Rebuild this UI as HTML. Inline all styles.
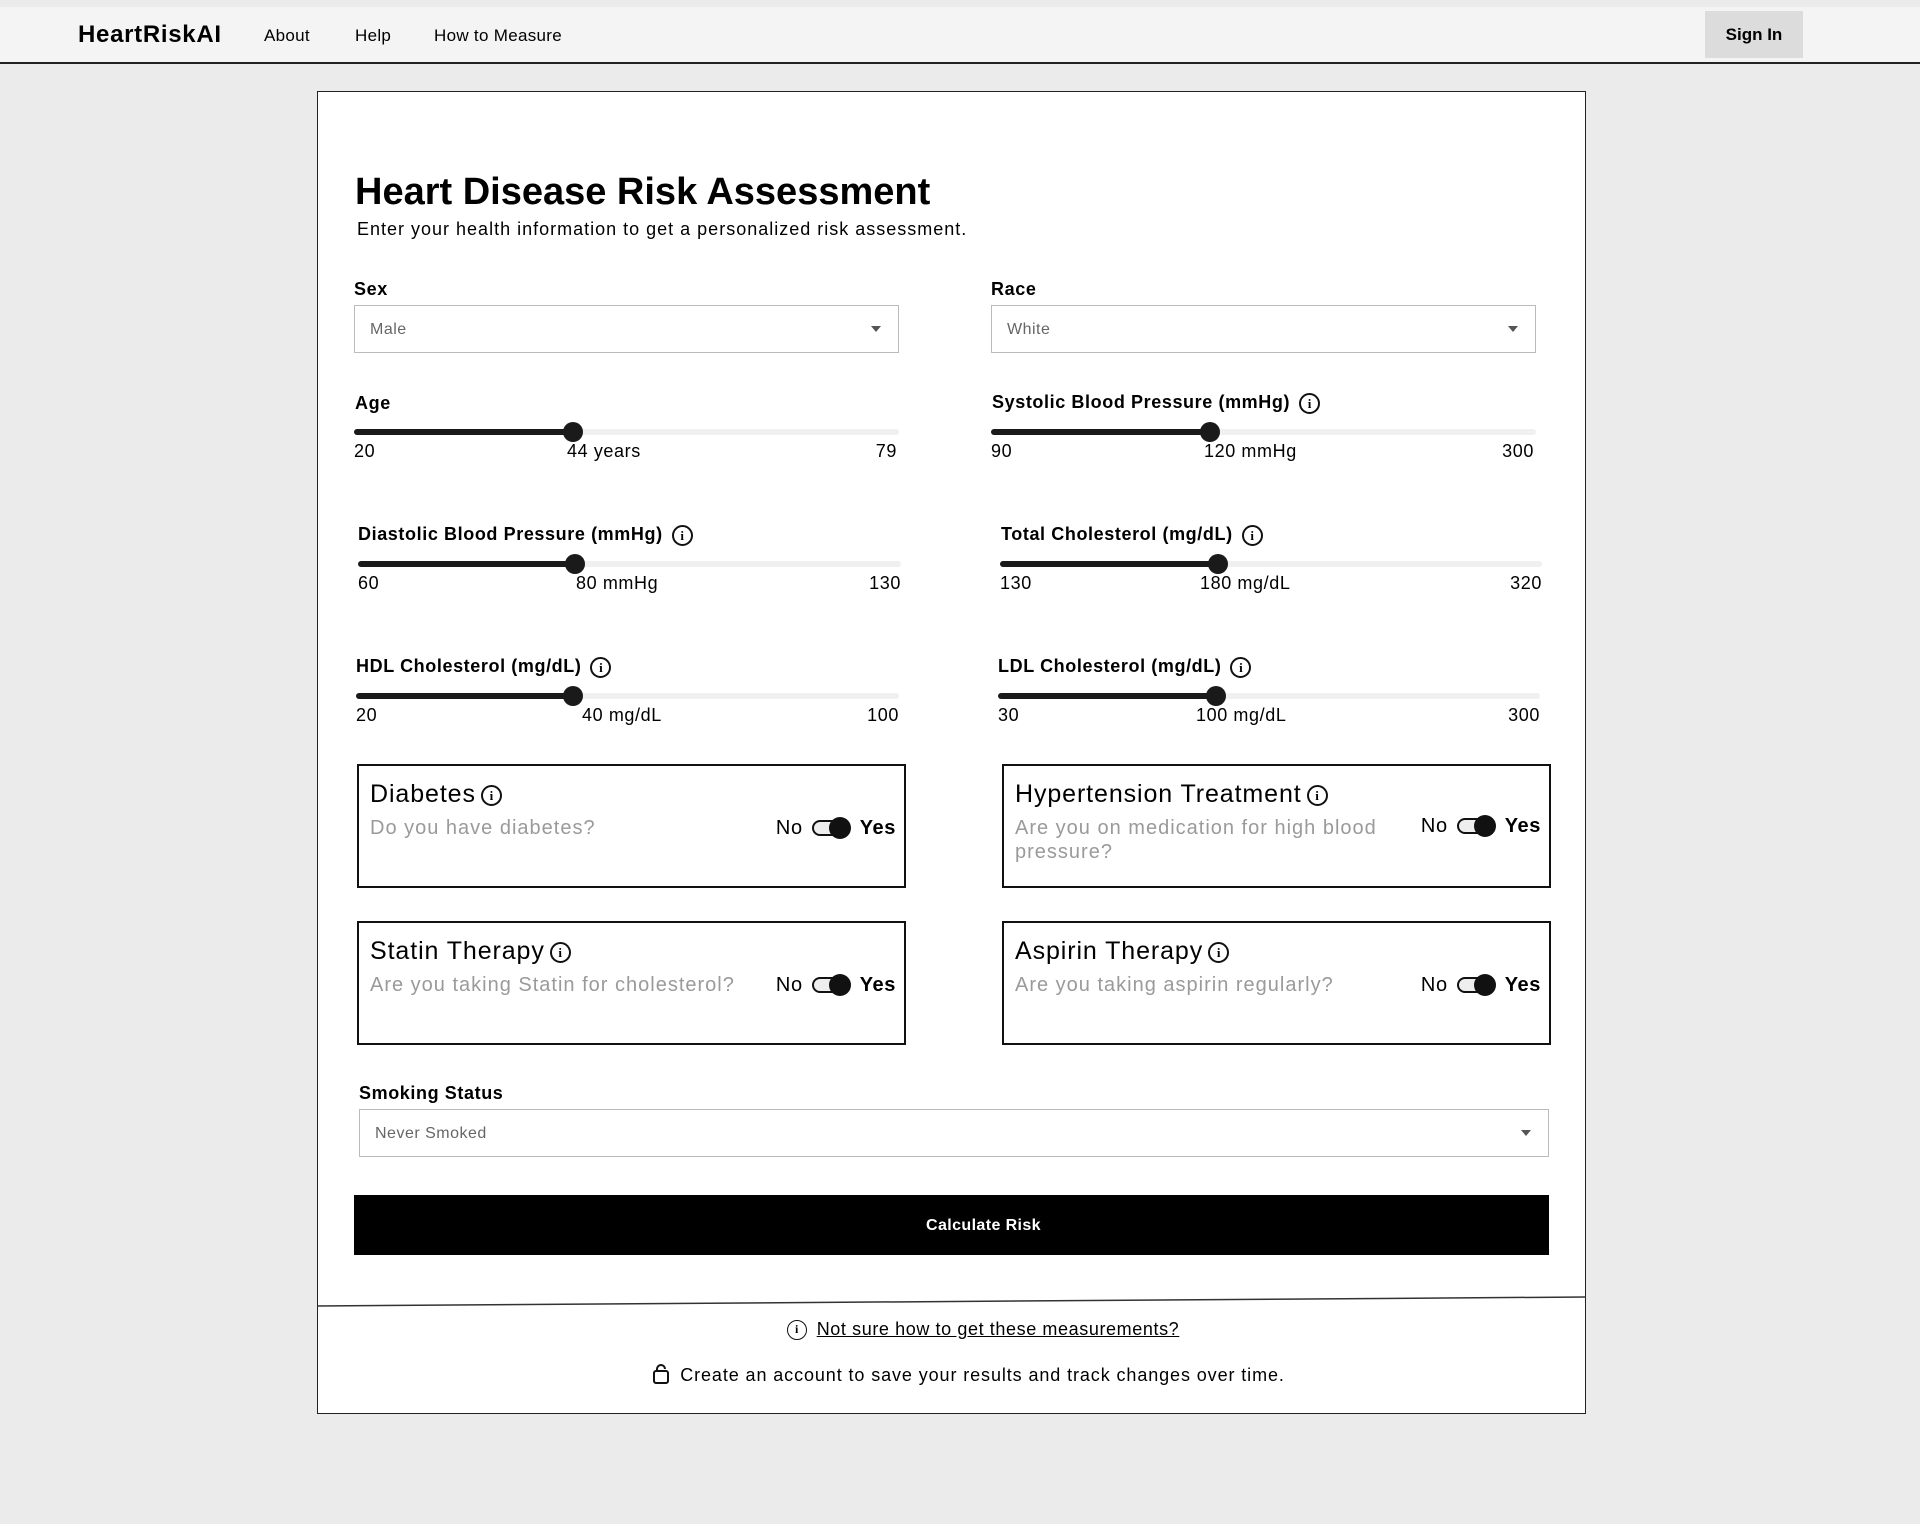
<!DOCTYPE html>
<html><head><meta charset="utf-8"><style>
*{box-sizing:border-box;margin:0;padding:0}
body{width:1920px;height:1524px;background:#ebebeb;font-family:"Liberation Sans",sans-serif;color:#000;position:relative;overflow:hidden}
.a{position:absolute;white-space:nowrap}
.nav{position:absolute;left:0;top:7px;width:1920px;height:57px;background:#f4f4f4;border-bottom:2px solid #222}
.card{position:absolute;left:317px;top:91px;width:1269px;height:1323px;background:#fff;border:1.5px solid #222}
.lbl{font-size:18px;font-weight:bold;line-height:20px;letter-spacing:0.6px}
.sel{position:absolute;height:48px;border:1.5px solid #bbb;background:#fff;font-size:16px;color:#666;padding:15px 15px;line-height:18px;letter-spacing:0.5px}
.sel::after{content:"";position:absolute;right:17px;top:20px;border-left:5px solid transparent;border-right:5px solid transparent;border-top:6px solid #555}
.track{position:absolute;height:6px;background:#f0f0f0;border-radius:3px}
.fill{position:absolute;left:0;top:0;height:6px;background:#1a1a1a;border-radius:3px}
.th{position:absolute;top:-7px;width:20px;height:20px;border-radius:50%;background:#1a1a1a;margin-left:-10px}
.tk{position:absolute;font-size:18px;line-height:20px;top:12px;letter-spacing:0.6px}
.info{display:inline-block;width:21px;height:21px;border:2px solid #111;border-radius:50%;font-size:13px;font-weight:bold;text-align:center;line-height:17px;vertical-align:middle;margin-left:9px;font-family:"Liberation Serif",serif;letter-spacing:0}
.tc{position:absolute;border:2px solid #111;background:#fff}
.tc .t{position:absolute;left:11px;top:14px;font-size:25px;line-height:28px;letter-spacing:0.9px}
.tc .t .info{margin-left:5px}
.tc .s{position:absolute;left:11px;top:50px;font-size:20px;color:#9a9a9a;line-height:24px;white-space:normal;letter-spacing:1px}
.tog{position:absolute;right:8px;top:50px;font-size:20px;line-height:24px;display:flex;align-items:center;letter-spacing:0.6px}
.sw{display:inline-block;position:relative;width:38px;height:16px;border:2px solid #111;border-radius:8px;margin:0 10px 0 9px;background:#eee}
.sw::after{content:"";position:absolute;right:-3px;top:-5px;width:22px;height:22px;border-radius:50%;background:#111}
</style></head><body>
<div class="nav">
 <div class="a" style="left:78px;top:14px;font-size:24px;font-weight:bold;letter-spacing:0.7px">HeartRiskAI</div>
 <div class="a" style="left:264px;top:19px;font-size:17px;letter-spacing:0.3px">About</div>
 <div class="a" style="left:355px;top:19px;font-size:17px;letter-spacing:0.3px">Help</div>
 <div class="a" style="left:434px;top:19px;font-size:17px;letter-spacing:0.3px">How to Measure</div>
 <div class="a" style="left:1705px;top:4px;width:98px;height:47px;background:#dcdcdc;font-size:17px;font-weight:bold;text-align:center;line-height:47px">Sign In</div>
</div>
<div class="a" style="left:355px;top:171px;font-size:38px;font-weight:bold">Heart Disease Risk Assessment</div>
<div class="a" style="left:357px;top:219px;font-size:18px;letter-spacing:1px">Enter your health information to get a personalized risk assessment.</div>
<div class="card" style="z-index:-1"></div>

<div class="a lbl" style="left:354px;top:279px">Sex</div>
<div class="sel" style="left:354px;top:305px;width:545px">Male</div>
<div class="a lbl" style="left:991px;top:279px">Race</div>
<div class="sel" style="left:991px;top:305px;width:545px">White</div>

<div class="a lbl" style="left:355px;top:393px">Age</div>
<div class="track" style="left:354px;top:429px;width:545px"><div class="fill" style="width:219px"></div><div class="th" style="left:219px"></div>
<div class="tk" style="left:0">20</div><div class="tk" style="left:213px">44 years</div><div class="tk" style="right:2px">79</div></div>

<div class="a lbl" style="left:992px;top:392px">Systolic Blood Pressure (mmHg)<span class="info">i</span></div>
<div class="track" style="left:991px;top:429px;width:545px"><div class="fill" style="width:219px"></div><div class="th" style="left:219px"></div>
<div class="tk" style="left:0">90</div><div class="tk" style="left:213px">120 mmHg</div><div class="tk" style="right:2px">300</div></div>

<div class="a lbl" style="left:358px;top:524px">Diastolic Blood Pressure (mmHg)<span class="info">i</span></div>
<div class="track" style="left:358px;top:561px;width:543px"><div class="fill" style="width:217px"></div><div class="th" style="left:217px"></div>
<div class="tk" style="left:0">60</div><div class="tk" style="left:218px">80 mmHg</div><div class="tk" style="right:0">130</div></div>

<div class="a lbl" style="left:1001px;top:524px">Total Cholesterol (mg/dL)<span class="info">i</span></div>
<div class="track" style="left:1000px;top:561px;width:542px"><div class="fill" style="width:218px"></div><div class="th" style="left:218px"></div>
<div class="tk" style="left:0">130</div><div class="tk" style="left:200px">180 mg/dL</div><div class="tk" style="right:0">320</div></div>

<div class="a lbl" style="left:356px;top:656px">HDL Cholesterol (mg/dL)<span class="info">i</span></div>
<div class="track" style="left:356px;top:693px;width:543px"><div class="fill" style="width:217px"></div><div class="th" style="left:217px"></div>
<div class="tk" style="left:0">20</div><div class="tk" style="left:226px">40 mg/dL</div><div class="tk" style="right:0">100</div></div>

<div class="a lbl" style="left:998px;top:656px">LDL Cholesterol (mg/dL)<span class="info">i</span></div>
<div class="track" style="left:998px;top:693px;width:542px"><div class="fill" style="width:218px"></div><div class="th" style="left:218px"></div>
<div class="tk" style="left:0">30</div><div class="tk" style="left:198px">100 mg/dL</div><div class="tk" style="right:0">300</div></div>

<div class="tc" style="left:357px;top:764px;width:549px;height:124px"><div class="t">Diabetes<span class="info">i</span></div><div class="s">Do you have diabetes?</div><div class="tog">No<span class="sw"></span><b>Yes</b></div></div>
<div class="tc" style="left:1002px;top:764px;width:549px;height:124px"><div class="t">Hypertension Treatment<span class="info">i</span></div><div class="s" style="width:400px">Are you on medication for high blood pressure?</div><div class="tog" style="top:48px">No<span class="sw"></span><b>Yes</b></div></div>
<div class="tc" style="left:357px;top:921px;width:549px;height:124px"><div class="t">Statin Therapy<span class="info">i</span></div><div class="s">Are you taking Statin for cholesterol?</div><div class="tog">No<span class="sw"></span><b>Yes</b></div></div>
<div class="tc" style="left:1002px;top:921px;width:549px;height:124px"><div class="t">Aspirin Therapy<span class="info">i</span></div><div class="s">Are you taking aspirin regularly?</div><div class="tog">No<span class="sw"></span><b>Yes</b></div></div>

<div class="a lbl" style="left:359px;top:1083px">Smoking Status</div>
<div class="sel" style="left:359px;top:1109px;width:1190px">Never Smoked</div>
<div class="a" style="left:354px;top:1195px;width:1195px;height:60px;background:#000;color:#fff;font-size:16px;font-weight:bold;text-align:center;line-height:62px;padding-left:64px;letter-spacing:0.4px">Calculate Risk</div>

<svg class="a" style="left:317px;top:1294px" width="1269" height="14"><line x1="0" y1="12" x2="1269" y2="3" stroke="#333" stroke-width="1.5"/></svg>
<div class="a" style="left:0;width:1966px;top:1319px;text-align:center;font-size:18px;letter-spacing:0.6px"><span class="info" style="margin:0 10px 0 0;font-size:12px;width:20px;height:20px;line-height:16px;border-width:1.8px">i</span><span style="text-decoration:underline">Not sure how to get these measurements?</span></div>
<div class="a" style="left:0;width:1937px;top:1364px;text-align:center;font-size:18px;letter-spacing:0.9px"><svg width="18" height="20" viewBox="0 0 18 20" style="vertical-align:-3px;margin-right:10px"><rect x="2" y="7" width="14" height="12" rx="2" fill="none" stroke="#111" stroke-width="2"/><path d="M5 7V5a4 4 0 0 1 8 0" fill="none" stroke="#111" stroke-width="2"/></svg>Create an account to save your results and track changes over time.</div>
</body></html>
